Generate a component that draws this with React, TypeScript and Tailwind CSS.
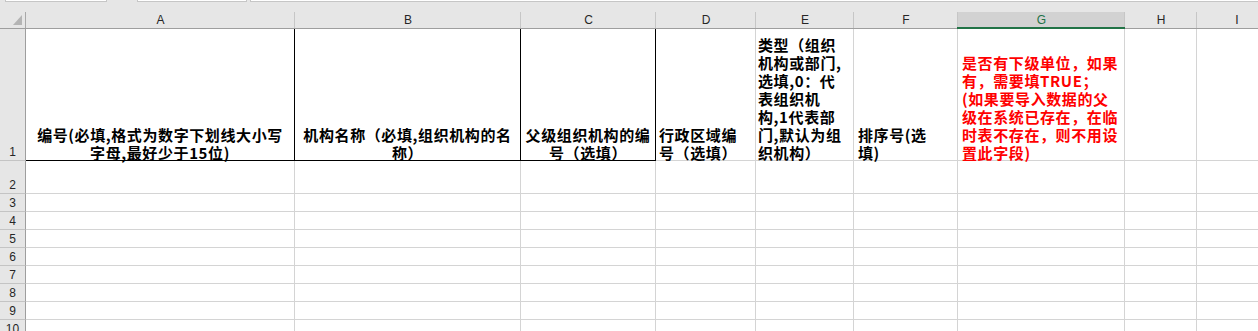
import React from "react";

type Col = { key: string; w: string };

const cols: Col[] = [
  { key: "A", w: "w-[269px]" },
  { key: "B", w: "w-[226px]" },
  { key: "C", w: "w-[135px]" },
  { key: "D", w: "w-[100px]" },
  { key: "E", w: "w-[98px]" },
  { key: "F", w: "w-[104px]" },
  { key: "G", w: "w-[167px]" },
  { key: "H", w: "w-[72px]" },
  { key: "I", w: "w-[80px]" },
];

const cjk = { fontFamily: '"Noto Sans CJK SC", "Noto Sans", sans-serif' };
const ui = { fontFamily: '"Liberation Sans", Arial, sans-serif' };

function Lines({ lines }: { lines: string[] }) {
  return (
    <div className="translate-y-[2px] whitespace-nowrap leading-[18px]">
      {lines.map((l, i) => (
        <React.Fragment key={i}>
          {i > 0 && <br />}
          {l}
        </React.Fragment>
      ))}
    </div>
  );
}

function RowHead({ n, h }: { n: number; h: string }) {
  return (
    <div
      className={`${h} w-[26px] shrink-0 box-border border-r border-b border-r-[#9e9e9e] border-b-[#c4c4c4] bg-[#e6e6e6] flex items-end justify-center text-[12px] leading-[14px] pb-[1px] text-[#262626]`}
      style={ui}
    >
      {n}
    </div>
  );
}

function EmptyRow({ n, h }: { n: number; h: string }) {
  return (
    <div className="flex">
      <RowHead n={n} h={h} />
      {cols.map((c) => (
        <div
          key={c.key}
          className={`${c.w} ${h} shrink-0 box-border border-r border-b border-[#d4d4d4] bg-white`}
        />
      ))}
    </div>
  );
}

export default function App() {
  const heights = ["h-[18px]", "h-[18px]", "h-[18px]", "h-[18px]", "h-[18px]", "h-[18px]", "h-[18px]", "h-[18px]"];
  return (
    <div className="w-[1258px] h-[331px] overflow-hidden bg-white" style={ui}>
      {/* top strip */}
      <div className="h-[12px] bg-[#e6e6e6] flex items-start">
        <div className="ml-[5px] w-[102px] h-[2px] bg-white border-x border-b border-[#c6c6c6] box-border" />
        <div className="ml-[30px] w-[110px] h-[2px] bg-white border-x border-b border-[#c6c6c6] box-border" />
        <div className="ml-[3px] flex-1 h-[2px] bg-white border-l border-b border-[#c6c6c6] box-border" />
      </div>

      {/* column header */}
      <div className="flex h-[17px] box-border border-b border-[#9e9e9e] bg-[#e6e6e6]">
        <div className="relative w-[26px] shrink-0 h-full">
          <svg className="absolute left-[12px] top-[2px]" width="11" height="12" viewBox="0 0 11 12">
            <polygon points="1,11 10,11 10,1" fill="#b4b4b4" />
          </svg>
          <div className="absolute right-0 top-0 bottom-0 w-px bg-[#a8a8a8]" />
        </div>
        {cols.map((c) => {
          const sel = c.key === "G";
          return (
            <div
              key={c.key}
              className={`${c.w} relative shrink-0 h-full flex items-center justify-center text-[12px] ${
                sel ? "bg-[#d2d2d2] text-[#217346]" : "text-[#262626]"
              }`}
            >
              {c.key}
              <div className="absolute right-0 top-0 bottom-0 w-px bg-[#c6c6c6]" />
              {sel && <div className="absolute -left-px right-0 bottom-[-1px] h-[2px] bg-[#217346]" />}
            </div>
          );
        })}
      </div>

      {/* row 1 */}
      <div className="flex font-bold text-[15px] tracking-[0.6px] text-black" style={cjk}>
        <div
          className="h-[132px] w-[26px] shrink-0 box-border border-r border-b border-r-[#9e9e9e] border-b-[#c4c4c4] bg-[#e6e6e6] flex items-end justify-center text-[12px] leading-[14px] pb-[1px] font-normal tracking-normal text-[#262626]"
          style={ui}
        >
          1
        </div>
        <div className="w-[269px] h-[132px] shrink-0 box-border border-r border-b border-black flex items-end justify-center text-center">
          <Lines lines={["编号(必填,格式为数字下划线大小写", "字母,最好少于15位)"]} />
        </div>
        <div className="w-[226px] h-[132px] shrink-0 box-border border-r border-b border-black flex items-end justify-center text-center">
          <Lines lines={["机构名称（必填,组织机构的名", "称）"]} />
        </div>
        <div className="w-[135px] h-[132px] shrink-0 box-border border-r border-b border-black flex items-end justify-center text-center">
          <Lines lines={["父级组织机构的编", "号（选填）"]} />
        </div>
        <div className="w-[100px] h-[132px] shrink-0 box-border border-r border-b border-[#d4d4d4] flex items-end pl-[3px]">
          <Lines lines={["行政区域编", "号（选填）"]} />
        </div>
        <div className="w-[98px] h-[132px] shrink-0 box-border border-r border-b border-[#d4d4d4] flex items-end pl-[2px]">
          <Lines
            lines={["类型（组织", "机构或部门,", "选填,0：代", "表组织机", "构,1代表部", "门,默认为组", "织机构）"]}
          />
        </div>
        <div className="w-[104px] h-[132px] shrink-0 box-border border-r border-b border-[#d4d4d4] flex items-end pl-[4px]">
          <Lines lines={["排序号(选", "填)"]} />
        </div>
        <div className="w-[167px] h-[132px] shrink-0 box-border border-r border-b border-[#d4d4d4] flex items-end pl-[4px] text-[#ff0000]">
          <Lines
            lines={[
              "是否有下级单位，如果",
              "有，需要填TRUE；",
              "(如果要导入数据的父",
              "级在系统已存在，在临",
              "时表不存在，则不用设",
              "置此字段)",
            ]}
          />
        </div>
        <div className="w-[72px] h-[132px] shrink-0 box-border border-r border-b border-[#d4d4d4]" />
        <div className="w-[80px] h-[132px] shrink-0 box-border border-r border-b border-[#d4d4d4]" />
      </div>

      <EmptyRow n={2} h="h-[33px]" />
      {heights.map((h, i) => (
        <EmptyRow key={i} n={i + 3} h={h} />
      ))}
    </div>
  );
}
